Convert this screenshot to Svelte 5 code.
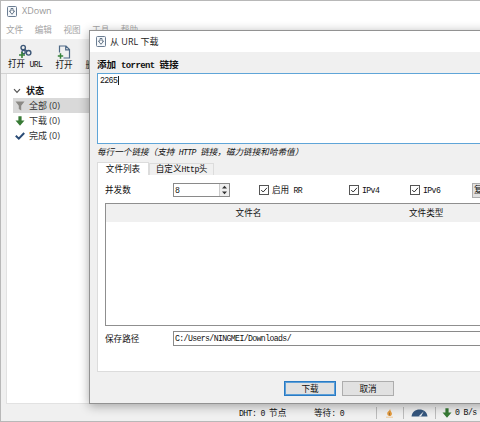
<script>
  let links = $state('2265');
  let activeTab = $state('files');
  let connections = $state(8);
  let savePath = $state('C:/Users/NINGMEI/Downloads/');

  const menus = ['文件', '编辑', '视图', '工具', '帮助'];

  const filters = [
    { id: 'all', label: '全部', count: 0 },
    { id: 'downloading', label: '下载', count: 0 },
    { id: 'done', label: '完成', count: 0 }
  ];

  let selected = $state('all');

  // latin runs use a narrower half-width face than the CJK runs
  function runs(text) {
    return text.match(/[\x20-\x7e]+|[^\x20-\x7e]+/g) ?? [];
  }
</script>

{#snippet mixed(text)}{#each runs(text) as run}{#if run.charCodeAt(0) < 127}<span class="latin">{run}</span>{:else}{run}{/if}{/each}{/snippet}

{#snippet appIcon()}
  <svg class="app-icon" viewBox="0 0 10 11">
    <rect x="0.5" y="0.5" width="9" height="10" rx="1" fill="#f5f8fb" stroke="#6b7d92" />
    <path d="M4 2.5h2v2.5h1.6L5 8.3 2.4 5H4z" fill="#fff" stroke="#44586f" stroke-width="0.8" />
  </svg>
{/snippet}

{#snippet downArrow()}
  <svg class="arrow-icon" viewBox="0 0 10 10">
    <path d="M3.4 0.3h3.2v4.2h2.9L5 9.7 0.5 4.5h2.9z" fill="#377a35" />
  </svg>
{/snippet}

<div class="app-window">
  <header class="title-bar">
    {@render appIcon()}
    <span>XDown</span>
  </header>

  <nav class="menu-bar">
    {#each menus as menu}
      <span>{menu}</span>
    {/each}
  </nav>

  <div class="toolbar">
    <button type="button" class="tool open-url">
      <svg viewBox="0 0 14 14">
        <g fill="none" stroke="#3d5878" stroke-width="1.4">
          <circle cx="5.2" cy="3.6" r="2.2" />
          <circle cx="10.6" cy="8.8" r="2.3" />
          <circle cx="5.6" cy="8" r="1.7" />
          <path d="M6.7 5.2 9 7.2" />
        </g>
        <path d="M4 8v6M1 11h6" stroke="#37833a" stroke-width="1.6" />
      </svg>
      <span>{@render mixed('打开 URL')}</span>
    </button>
    <button type="button" class="tool open-file">
      <svg viewBox="0 0 14 14">
        <path d="M2.5 7.5V1H9l3.5 3.5V13H6.5M8.7 1v3.8h3.8" fill="none" stroke="#4e6986" stroke-width="1.2" />
        <path d="M3.5 8.3v5.4M0.8 11h5.4" stroke="#37833a" stroke-width="1.5" />
      </svg>
      <span>打开</span>
    </button>
    <button type="button" class="tool delete"><span>删除</span></button>
  </div>

  <main class="content">
    <aside class="sidebar">
      <div class="group">
        <svg viewBox="0 0 8 6"><path d="M1 1.2 4 4.4 7 1.2" fill="none" stroke="#555" stroke-width="1.2" /></svg>
        <strong>状态</strong>
      </div>
      {#each filters as filter (filter.id)}
        <button type="button" class="filter" class:selected={selected === filter.id} onclick={() => (selected = filter.id)}>
          {#if filter.id === 'all'}
            <svg viewBox="0 0 10 10"><path d="M0.5 0.5h9L6.2 4.8v4.7L3.8 8V4.8z" fill="#8b8985" /></svg>
          {:else if filter.id === 'downloading'}
            {@render downArrow()}
          {:else}
            <svg viewBox="0 0 10 10"><path d="M0.8 4.8 3.8 7.7 9.2 2" fill="none" stroke="#294b76" stroke-width="2" /></svg>
          {/if}
          <span>{filter.label} ({filter.count})</span>
        </button>
      {/each}
    </aside>
  </main>

  <footer class="status-bar">
    <span class="dht">{@render mixed('DHT: 0 节点')}</span>
    <span class="waiting">{@render mixed('等待: 0')}</span>
    <span class="status-cell flame">
      <svg viewBox="0 0 9 10">
        <path d="M5 0.8C5 3 2 3.4 2.3 6c.1 1.2 1 2 2.3 2 1.6 0 2.5-1.2 2.3-2.6C6.7 4 5.3 3.2 5 0.8z" fill="#e49a3c" />
        <path d="M4.5 4.8v2.6" stroke="#8e6a3d" stroke-width="0.8" />
        <path d="M1 9.2h7" stroke="#edc795" />
      </svg>
    </span>
    <span class="status-cell gauge">
      <svg viewBox="0 0 17 8">
        <path d="M0.5 7.5C1 3 4.5 0.5 8.5 0.5s7.5 2.5 8 7z" fill="#35567d" />
        <path d="M7.5 7.5 12.8 2.2 10 7.5z" fill="#e9edf1" />
      </svg>
    </span>
    <span class="status-cell speed">
      {@render downArrow()}
      {@render mixed('0 B/s')}
    </span>
  </footer>

  <section class="dialog" role="dialog" aria-label="从 URL 下载">
    <header class="dialog-title">
      {@render appIcon()}
      <span>从 URL 下载</span>
    </header>

    <div class="dialog-body">
      <h2>{@render mixed('添加 torrent 链接')}</h2>
      <div class="links">{@render mixed(links)}<i class="caret"></i></div>
      <p class="hint">{@render mixed('每行一个链接（支持 HTTP 链接，磁力链接和哈希值）')}</p>

      <div class="tabs">
        <button type="button" class="tab" class:active={activeTab === 'files'} onclick={() => (activeTab = 'files')}>文件列表</button>
        <button type="button" class="tab" class:active={activeTab === 'headers'} onclick={() => (activeTab = 'headers')}>{@render mixed('自定义Http头')}</button>
      </div>

      <div class="panel">
        <div class="options">
          <span class="field-label">并发数</span>
          <div class="spin">
            <span class="value">{@render mixed(String(connections))}</span>
            <button type="button" class="steps" aria-label="并发数" onclick={() => connections++}>
              <svg viewBox="0 0 9 12"><path d="M2 4.6 4.5 1.8 7 4.6zM2 7.4 4.5 10.2 7 7.4z" fill="#333" /></svg>
            </button>
          </div>
          {#each ['启用 RR', 'IPv4', 'IPv6'] as option, i}
            <label class="check check-{i}">
              <svg viewBox="0 0 10 10">
                <rect x="0.5" y="0.5" width="9" height="9" fill="#fff" stroke="#555" />
                <path d="M2.2 5 4.2 7 8 2.8" fill="none" stroke="#333" />
              </svg>
              <span>{@render mixed(option)}</span>
            </label>
          {/each}
          <button type="button" class="copy">复制</button>
        </div>

        <div class="table">
          <div class="table-head">
            <span>文件名</span>
            <span>文件类型</span>
          </div>
        </div>

        <div class="save-row">
          <span class="field-label">保存路径</span>
          <div class="path">{@render mixed(savePath)}</div>
        </div>
      </div>

      <div class="actions">
        <button type="button" class="primary">下载</button>
        <button type="button">取消</button>
      </div>
    </div>
  </section>
</div>

<style>
  :global(body) {
    overflow: hidden;
  }

  .app-window {
    position: relative;
    display: flex;
    flex-direction: column;
    box-sizing: border-box;
    width: 480px;
    height: 422px;
    overflow: hidden;
    border: 1px solid #b8b8b8;
    border-right: none;
    background: #f0f0f0;
    color: #111;
    font: 8.6px/12px "Liberation Sans", "Noto Sans CJK SC", sans-serif;
    white-space: nowrap;
  }

  button {
    margin: 0;
    padding: 0;
    border: none;
    background: none;
    color: inherit;
    font: inherit;
    white-space: nowrap;
  }

  svg {
    display: block;
    flex: none;
  }

  .latin {
    font-family: "Liberation Mono", monospace;
    font-size: 8.2px;
    letter-spacing: -0.62px;
    white-space: pre;
  }

  .app-icon {
    width: 10px;
    height: 11px;
  }

  .arrow-icon {
    width: 10px;
    height: 10px;
  }

  .title-bar {
    display: flex;
    align-items: center;
    gap: 5px;
    height: 20px;
    padding-left: 6px;
    background: #fff;
    color: #999;
    font: 9px/12px "Open Sans", sans-serif;
  }

  .menu-bar {
    display: flex;
    align-items: center;
    gap: 11.5px;
    height: 18px;
    padding-left: 5px;
    background: #fff;
    color: #a5a5a5;
  }

  .toolbar {
    display: flex;
    height: 34px;
    border-bottom: 1px solid #d2d2d2;
  }

  .tool {
    display: flex;
    flex-direction: column;
    align-items: center;
    justify-content: flex-end;
    padding-bottom: 2px;
  }

  .tool svg {
    width: 14px;
    height: 14px;
  }

  .open-url {
    margin-left: 7px;
  }

  .open-file {
    margin-left: 13px;
  }

  .delete {
    margin-left: 13px;
  }

  .content {
    display: flex;
    flex: 1;
    padding-left: 5px;
  }

  .sidebar {
    flex: 1;
    padding-top: 10px;
    border: 1px solid #e2e2e2;
    border-top: none;
    background: #fff;
    font-family: "Open Sans", "Noto Sans CJK SC", sans-serif;
    font-size: 9px;
  }

  .group {
    display: flex;
    align-items: center;
    gap: 5px;
    height: 14px;
    padding-left: 6px;
  }

  .group svg {
    width: 8px;
    height: 6px;
  }

  .filter {
    display: flex;
    align-items: center;
    gap: 4px;
    width: 100%;
    height: 15px;
    padding-left: 8px;
    color: #333;
  }

  .filter svg {
    width: 10px;
    height: 10px;
  }

  .filter.selected {
    background: linear-gradient(90deg, transparent 6px, #d9d9d9 6px);
  }

  .status-bar {
    display: flex;
    align-items: center;
    box-sizing: border-box;
    height: 17px;
    padding-top: 1px;
  }

  .dht {
    margin-left: 238px;
    width: 75px;
  }

  .waiting {
    width: 62px;
  }

  .status-cell {
    display: flex;
    align-items: center;
    gap: 3px;
    height: 12px;
    border-left: 1px solid #bcbcbc;
  }

  .flame {
    width: 26px;
  }

  .flame svg {
    width: 9px;
    height: 10px;
    margin-left: 8px;
  }

  .gauge {
    width: 31px;
  }

  .gauge svg {
    width: 17px;
    height: 8px;
    margin-left: 7px;
  }

  .speed {
    padding-left: 6px;
  }

  .dialog {
    position: absolute;
    top: 29px;
    left: 88px;
    display: flex;
    flex-direction: column;
    box-sizing: border-box;
    width: 420px;
    height: 374px;
    border: 1px solid #929292;
    background: #f0f0f0;
    box-shadow: 0 2px 10px rgba(0, 0, 0, 0.33);
  }

  .dialog-title {
    display: flex;
    align-items: center;
    gap: 4px;
    height: 21px;
    padding-left: 6px;
    background: #fff;
    color: #222;
    font-family: "Open Sans", "Noto Sans CJK SC", sans-serif;
    font-size: 9px;
  }

  .dialog-body {
    display: flex;
    flex-direction: column;
    padding: 6px 0 0 7px;
  }

  h2 {
    margin: 0;
    font-size: 9.6px;
    font-weight: 700;
    line-height: 14px;
  }

  h2 .latin {
    font-size: 9px;
    letter-spacing: -0.6px;
  }

  .links {
    display: flex;
    box-sizing: border-box;
    height: 71px;
    padding: 1px 2px;
    border: 1px solid #5fa5d8;
    background: #fff;
  }

  .caret {
    width: 1px;
    height: 9px;
    margin: 1px 0 0 1px;
    background: #222;
  }

  .hint {
    margin: 2px 0 0;
    font-style: italic;
    line-height: 13px;
  }

  .tabs {
    display: flex;
    align-items: flex-end;
    height: 16px;
  }

  .tab {
    box-sizing: border-box;
    width: 65px;
    height: 12px;
    border: 1px solid #dcdcdc;
    border-bottom: none;
    background: #f0f0f0;
    line-height: 11px;
  }

  .tab.active {
    width: 52px;
    height: 13px;
    background: #fff;
  }

  .panel {
    box-sizing: border-box;
    height: 197px;
    padding: 8px 0 0 7px;
    border: 1px solid #dcdcdc;
    border-top: none;
    background: #fff;
  }

  .options,
  .save-row {
    display: flex;
    align-items: center;
    height: 14px;
  }

  .save-row {
    height: 15px;
  }

  .options > * {
    flex: none;
  }

  .field-label {
    width: 68px;
  }

  .spin {
    display: flex;
    box-sizing: border-box;
    width: 57px;
    height: 14px;
    border: 1px solid #8a8a8a;
  }

  .value {
    flex: 1;
    padding-left: 1px;
  }

  .steps {
    width: 10px;
    height: 12px;
    border-left: 1px solid #ccc;
    background: #eee;
  }

  .steps svg {
    width: 9px;
    height: 12px;
  }

  .check {
    display: flex;
    align-items: center;
    gap: 3px;
  }

  .check svg {
    width: 10px;
    height: 10px;
  }

  .check-0 {
    width: 90px;
    margin-left: 29px;
  }

  .check-1 {
    width: 61px;
  }

  .check-2 {
    width: 62px;
  }

  .copy {
    box-sizing: border-box;
    width: 40px;
    height: 15px;
    padding-left: 1px;
    border: 1px solid #adadad;
    background: #e1e1e1;
    text-align: left;
  }

  .table {
    box-sizing: border-box;
    height: 123px;
    margin: 6px 0 5px;
    border: 1px solid #8f8f8f;
  }

  .table-head {
    display: flex;
    align-items: center;
    height: 18px;
    background: #f0f0f0;
  }

  .table-head span:first-child {
    width: 285px;
    text-align: center;
  }

  .table-head span:last-child {
    margin-left: 18px;
  }

  .path {
    flex: 1;
    box-sizing: border-box;
    height: 15px;
    padding-left: 1px;
    border: 1px solid #8a8a8a;
    line-height: 12px;
  }

  .actions {
    display: flex;
    gap: 6px;
    padding: 9px 0 0 187px;
  }

  .actions button {
    box-sizing: border-box;
    width: 52px;
    height: 15px;
    border: 1px solid #adadad;
    background: #e1e1e1;
    line-height: 12px;
  }

  .actions .primary {
    border: 1px solid #2a7bc4;
    box-shadow: inset 0 0 0 1px #5c9fd8;
  }
</style>
